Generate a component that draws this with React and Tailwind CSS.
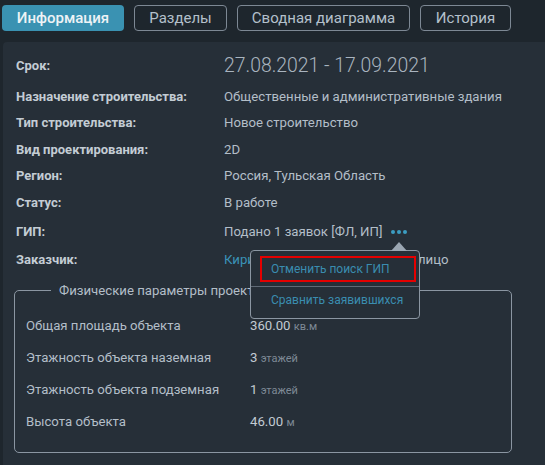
const tabs = [
  { name: 'Информация', w: 'w-[122px]', active: true },
  { name: 'Разделы', w: 'w-[93px]' },
  { name: 'Сводная диаграмма', w: 'w-[173px]' },
  { name: 'История', w: 'w-[91px]' },
];

const rows = [
  { label: 'Назначение строительства:', value: 'Общественные и административные здания', h: 'h-[27px]' },
  { label: 'Тип строительства:', value: 'Новое строительство', h: 'h-[26px]' },
  { label: 'Вид проектирования:', value: '2D', h: 'h-[27px]' },
  { label: 'Регион:', value: 'Россия, Тульская Область', h: 'h-[26px]' },
  { label: 'Статус:', value: 'В работе', h: 'h-[27px]' },
];

const params = [
  { label: 'Общая площадь объекта', value: '360.00', unit: 'кв.м' },
  { label: 'Этажность объекта наземная', value: '3', unit: 'этажей' },
  { label: 'Этажность объекта подземная', value: '1', unit: 'этажей' },
  { label: 'Высота объекта', value: '46.00', unit: 'м' },
];

export default function App() {
  return (
    <div className="w-[545px] h-[465px] overflow-hidden bg-[#1e262d] font-['Roboto',sans-serif]">
      <div className="flex gap-[10px] pl-[2px] pt-[5px] h-[42px]">
        {tabs.map(t => (
          <div
            key={t.name}
            className={`${t.w} h-[26px] rounded-[4px] flex items-center justify-center text-[15px] ${
              t.active
                ? 'bg-[#3a92b2] text-[#eef3f6] font-medium'
                : 'border border-[#7d8894] text-[#b4c0cb]'
            }`}
          >
            {t.name}
          </div>
        ))}
      </div>

      <div className="relative ml-[3px] h-[423px] bg-[#262f38] rounded-tl-[4px] pl-[13px] pt-[11px]">
        <div className="flex items-center h-[26px]">
          <div className="w-[208px] text-[13px] font-bold text-[#c3ccd4]">Срок:</div>
          <div className="text-[19.4px] font-light text-[#a9b4bf] leading-none">27.08.2021 - 17.09.2021</div>
        </div>
        <div className="h-[4px]" />
        {rows.map(r => (
          <div key={r.label} className={`flex items-center ${r.h}`}>
            <div className="w-[208px] text-[13px] font-bold text-[#c3ccd4]">{r.label}</div>
            <div className="text-[13.2px] text-[#b3bec8]">{r.value}</div>
          </div>
        ))}
        <div className="flex items-center h-[30px] mt-[1px]">
          <div className="w-[208px] text-[13px] font-bold text-[#c3ccd4]">ГИП:</div>
          <div className="text-[13.2px] text-[#b3bec8]">Подано 1 заявок [ФЛ, ИП]</div>
          <div className="ml-[9px] flex gap-[2px] items-center">
            <span className="w-[4px] h-[4px] rounded-full bg-[#3c9dc2]" />
            <span className="w-[4px] h-[4px] rounded-full bg-[#3c9dc2]" />
            <span className="w-[4px] h-[4px] rounded-full bg-[#3c9dc2]" />
          </div>
        </div>
        <div className="flex items-center h-[26px]">
          <div className="w-[208px] text-[13px] font-bold text-[#c3ccd4]">Заказчик:</div>
          <div className="text-[13.2px] text-[#b3bec8]">
            <span className="text-[#3a93b8]">Кириллов Кирилл</span>, физическое лицо
          </div>
        </div>

        <fieldset className="mt-[8px] mr-[33px] ml-[-2px] h-[172px] border border-[#8b96a2] rounded-[5px] pl-[11px] pt-[9px]">
          <legend className="ml-[25px] px-[8px] text-[13.2px] text-[#b3bec8]">Физические параметры проекта</legend>
          {params.map(p => (
            <div key={p.label} className="flex items-center h-[32px]">
              <div className="w-[224px] text-[13.2px] text-[#b3bec8]">{p.label}</div>
              <div className="text-[13.2px] text-[#c2cbd3]">
                {p.value} <span className="text-[11px] text-[#7e8a96]">{p.unit}</span>
              </div>
            </div>
          ))}
        </fieldset>

        <div className="absolute left-[247px] top-[208px] w-[170px]">
          <svg width="16" height="9" className="absolute left-[141px] top-[-8px]" viewBox="0 0 16 9">
            <path d="M0 9 L8 0 L16 9 Z" fill="#9aa6b2" />
          </svg>
          <div className="h-[69px] rounded-[4px] border border-[#8b96a2] bg-[#262f38] pl-[9px] pr-[3px] pt-[5px]">
            <div className="h-[26px] border-2 border-[#e50000] flex items-center pl-[9px] text-[12px] text-[#3a8db0]">
              Отменить поиск ГИП
            </div>
            <div className="mt-[4px] ml-[-9px] mr-[-3px] border-t border-[#5f6a76]" />
            <div className="h-[26px] flex items-center pl-[11px] text-[12px] text-[#3a8db0]">
              Сравнить заявившихся
            </div>
          </div>
        </div>
      </div>
    </div>
  );
}
